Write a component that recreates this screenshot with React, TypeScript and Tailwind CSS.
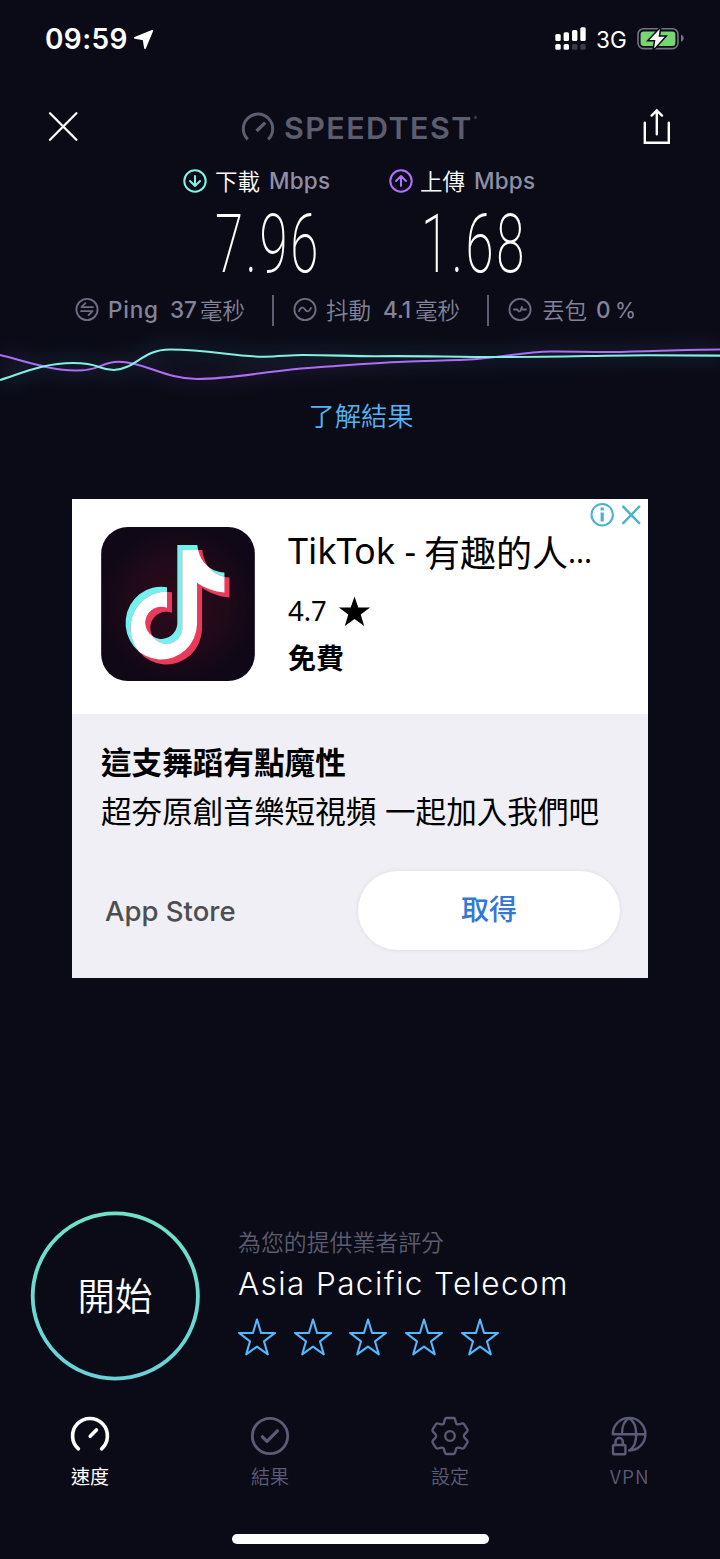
import type { ReactNode } from "react";

const tc = "font-['Noto_Sans_CJK_TC',sans-serif]";
const latin = "font-[Inter,'Noto_Sans_CJK_TC',sans-serif]";

const tabs = [
  { label: "速度", icon: <SpeedIcon />, active: true },
  { label: "結果", icon: <ResultsIcon />, active: false },
  { label: "設定", icon: <SettingsIcon />, active: false },
  { label: "VPN", icon: <VpnIcon />, active: false },
];

/* ─── Status bar ─── */
function StatusBar() {
  return (
    <div className={`flex h-[78px] items-center pl-[45px] pr-[36px] text-white ${latin}`}>
      <span className="w-[88px] text-[28px] font-semibold tracking-[0.4px]">09:59</span>
      <svg width="21" height="21" viewBox="133 28 21 21" fill="white" stroke="white" strokeWidth="1.8" strokeLinejoin="round">
        <path d="M152.2 29.8 134.9 36.8l8.7 1.6 1.4 8.7z" />
      </svg>
      <svg className="ml-auto" width="32" height="24" viewBox="555 26 32 24" fill="white">
        <rect x="555.3" y="33" width="5.4" height="7" rx="1.5" />
        <rect x="563.6" y="31.3" width="5.4" height="8.7" rx="1.5" />
        <rect x="572" y="29" width="5.4" height="11" rx="1.5" />
        <rect x="580.3" y="26.3" width="5.4" height="13.7" rx="1.5" />
        <rect x="555.3" y="43" width="5.4" height="5.8" rx="1.5" />
        <rect x="563.6" y="43" width="5.4" height="5.8" rx="1.5" />
        <rect x="572" y="43" width="5.4" height="5.8" rx="1.5" fill="#3b3b46" />
        <rect x="580.3" y="43" width="5.4" height="5.8" rx="1.5" fill="#3b3b46" />
      </svg>
      <span className="ml-[9px] mt-px w-[41px] text-[22.5px]">3G</span>
      <svg width="47" height="24" viewBox="637 27 47 24" fill="none">
        <rect x="638" y="28.8" width="40" height="19.8" rx="5.5" stroke="#74747e" strokeWidth="1.6" />
        <path d="M681 34.6c3.6 1.4 3.6 5.8 0 7.2z" fill="#74747e" />
        <rect x="640.6" y="31.4" width="34.8" height="14.6" rx="3.2" fill="#76d672" />
        <path d="M659.8 29 649.4 39.9h6l-1.3 8.5L664.6 36.8h-6z" fill="white" stroke="#0b0b17" strokeWidth="3" paintOrder="stroke" />
      </svg>
    </div>
  );
}

/* ─── Header ─── */
function Header() {
  return (
    <header className="flex h-[88px] items-center pl-[47px] pr-[48px] pt-[10px]">
      <svg width="32" height="32" viewBox="47 111 32 32" stroke="white" strokeWidth="2.3" strokeLinecap="round">
        <path d="m50 113.3 26.4 26.4M76.4 113.3 50 139.7" />
      </svg>
      <svg className="ml-[161px]" width="36" height="32" viewBox="240 111 36 32" fill="none" stroke="#5d5d70" strokeWidth="3">
        <path d="M247.8 139.4a14.7 14.7 0 1 1 20.4 0" />
        <path d="m256.6 131 8.6-8.4" strokeWidth="3.4" />
      </svg>
      <span className={`ml-[8px] mt-px w-[187px] whitespace-nowrap text-[30.5px] font-semibold leading-8 tracking-[1.4px] text-[#5d5d70] ${latin}`}>
        SPEEDTEST
      </span>
      <span className="mb-[20px] ml-[3px] size-[3px] rounded-full bg-[#3b3b4b]" />
      <svg className="ml-auto" width="30" height="38" viewBox="642 108 30 38" fill="none" stroke="white" strokeWidth="2.4" strokeLinecap="round">
        <path d="M644.8 122.8v20h24v-20M656.8 134.3v-23.6M651.6 115.6l5.2-5.2 5.2 5.2" />
      </svg>
    </header>
  );
}

/* ─── Results ─── */
function Arrow({ up = false }: { up?: boolean }) {
  return (
    <svg width="24" height="24" viewBox="-12 -12 24 24" fill="none" stroke={up ? "#b070fa" : "#80f2e6"} strokeWidth="2" strokeLinecap="round" strokeLinejoin="round">
      <circle r="10.7" />
      <path d={up ? "M0 5V-5M-5 0l5-5 5 5" : "M0-5V5M-5 0l5 5 5-5"} />
    </svg>
  );
}

function Stat({ children }: { children: ReactNode }) {
  return (
    <svg width="24" height="24" viewBox="-12 -11.5 24 24" fill="none" stroke="#6d6d84" strokeWidth="1.8" strokeLinecap="round" strokeLinejoin="round">
      <circle r="10.6" />
      {children}
    </svg>
  );
}

function Results() {
  return (
    <section>
      <div className={`flex h-[30px] items-center whitespace-nowrap pl-[183px] text-[22.5px] text-white ${latin}`}>
        <Arrow />
        <span className={`-mt-px ml-[8px] w-[54px] font-[350] ${tc}`}>下載</span>
        <span className="w-[120px] font-medium tracking-[0.2px] text-[#8e8ea6]">Mbps</span>
        <Arrow up />
        <span className={`-mt-px ml-[7px] w-[54px] font-[350] ${tc}`}>上傳</span>
        <span className="font-medium tracking-[0.2px] text-[#8e8ea6]">Mbps</span>
      </div>

      <div className="flex h-[94px] items-center pl-[215px] pt-[4px] font-[Roboto,sans-serif] text-[81px] font-[200] tracking-[4px] text-white">
        <span className="w-[206px] origin-left scale-x-[0.63] whitespace-nowrap">7.96</span>
        <span className="w-[206px] origin-left scale-x-[0.63] whitespace-nowrap">1.68</span>
      </div>

      <div className={`flex h-[40px] items-center whitespace-nowrap pl-[75px] text-[22.5px] text-[#83839a] ${latin}`}>
        <Stat>
          <path d="M6-2.4H-5.6l4-4M-6 1.6H5.6l-4 4" />
        </Stat>
        <span className="ml-[9px] w-[62px] font-medium tracking-[0.8px]">Ping</span>
        <span className="w-[30px] font-medium">37</span>
        <span className={`-mt-px w-[72px] font-[350] ${tc}`}>毫秒</span>
        <span className="h-[31px] w-[2px] bg-[#5d5d74]" />
        <span className="w-[19px]" />
        <Stat>
          <path d="M-6 1.6C-4-3-1.6-2.4 0 0s4 3 6-1.6" />
        </Stat>
        <span className={`-mt-px ml-[9px] w-[57px] font-[350] ${tc}`}>抖動</span>
        <span className="w-[32px] font-medium">4.1</span>
        <span className={`-mt-px w-[72px] font-[350] ${tc}`}>毫秒</span>
        <span className="h-[31px] w-[2px] bg-[#5d5d74]" />
        <span className="w-[19px]" />
        <Stat>
          <path d="M-6 0h3.4l1.4 2M6 0H2.6M.4 1.4 2-2.6" />
        </Stat>
        <span className={`-mt-px ml-[10px] w-[54px] font-[350] ${tc}`}>丟包</span>
        <span className="w-[19px] font-medium">0</span>
        <span className="text-[21.5px]">%</span>
      </div>
    </section>
  );
}

function SpeedGraph() {
  const download =
    "M0 380C25 372 45 363 73 363S98 370 114 370C136 369 142 349.5 170 349.5C210 349.5 235 357 264 356.7C280 356.5 290 355 303 355C330 355 350 356.2 376 356.2C420 355.6 450 357 500 357C560 357 600 355.4 647 355.2L720 355.6";
  const upload =
    "M0 355C25 361 50 370.5 76 370.5S100 361.7 119 361.7C145 362 165 379 197 379C235 379 270 370 321 367C350 365 375 363 404 361.8C430 360.6 455 360.6 477 359C505 357 525 351.8 551 351.6C570 351.4 590 352.2 611 352C650 351.6 680 349.5 720 349.4";
  return (
    <svg width="720" height="70" viewBox="0 330 720 70" fill="none" className="block">
      <defs>
        <filter id="glow" x="-5%" y="-100%" width="110%" height="300%">
          <feGaussianBlur stdDeviation="9" />
        </filter>
      </defs>
      <g strokeWidth="14" opacity="0.08" filter="url(#glow)">
        <path d={upload} stroke="#a56df0" />
        <path d={download} stroke="#5fd0ff" />
      </g>
      <path d={upload} stroke="#ad6df5" strokeWidth="2" />
      <path d={download} stroke="#84f0e4" strokeWidth="2.1" />
    </svg>
  );
}

/* ─── Ad card ─── */
function TikTokIcon() {
  const note =
    "M316 165H376C380 212 412 246 457 247V307C427 305 398 294 375 278V401A107 109 0 1 1 285 291V353A48 48 0 1 0 316 401Z";
  return (
    <svg width="154" height="154" viewBox="88 111 460 461">
      <defs>
        <radialGradient id="wine">
          <stop offset="0" stopColor="#300a1b" />
          <stop offset="0.6" stopColor="#200a19" />
          <stop offset="1" stopColor="#110817" />
        </radialGradient>
        <clipPath id="overlap">
          <path d={note} transform="translate(15 15)" />
        </clipPath>
      </defs>
      <rect x="88" y="111" width="460" height="461" rx="80" fill="url(#wine)" />
      <path d={note} fill="#74f1ee" />
      <path d={note} fill="#e93a5b" transform="translate(15 15)" />
      <g clipPath="url(#overlap)">
        <path d={note} fill="white" />
      </g>
    </svg>
  );
}

function AdCard() {
  return (
    <section className={`mx-[72px] mt-[67px] h-[479px] bg-[#efeff5] text-black ${tc}`}>
      <div className="flex h-[215px] bg-white">
        <div className="w-[216px] shrink-0 pl-[29px] pt-[28px]">
          <TikTokIcon />
        </div>
        <div className="min-w-0 flex-1 whitespace-nowrap pt-[29px]">
          <h2 className="flex h-[46px] items-center text-[36px]">
            <span className="w-[136px] font-['Noto_Sans',sans-serif] text-[36px]">TikTok -</span>
            <span>有趣的人</span>
            <span className="font-['Noto_Sans',sans-serif] text-[30px]">...</span>
          </h2>
          <div className="flex h-[74px] items-center">
            <span className="w-[50px] font-['Noto_Sans',sans-serif] text-[27.5px]">4.7</span>
            <svg width="33" height="31" viewBox="-16.5 -16 33 31">
              <path d="M0-15.5 3.8-4.4H15.6L6.2 2.6 9.7 14 0 7.1-9.7 14-6.2 2.6-15.6-4.4H-3.8Z" />
            </svg>
          </div>
          <p className="flex h-[18px] items-center text-[28px] font-bold">免費</p>
        </div>
        <svg className="-ml-[20px] mr-[7px] mt-[3px] shrink-0" width="52" height="26" viewBox="590 502 52 26" fill="none" stroke="#4bb1d3" strokeWidth="2">
          <circle cx="603.2" cy="514.7" r="10.7" />
          <path d="M603.2 512.4v9M603.2 507.4v3" strokeWidth="3.2" />
          <path d="m624.2 506.7 16 16.4M640.2 506.7l-16 16.4" strokeWidth="2.4" strokeLinecap="round" />
        </svg>
      </div>
      <div className="pl-[29px] pt-[23px]">
        <p className="flex h-[49px] items-center whitespace-nowrap text-[30.6px] font-bold">這支舞蹈有點魔性</p>
        <p className="flex h-[49px] items-center whitespace-nowrap text-[30.6px]">
          <span className="w-[284px]">超夯原創音樂短視頻</span>
          <span>一起加入我們吧</span>
        </p>
        <div className="mt-[36px] flex h-[79px] items-center pr-[28px]">
          <span className="ml-[4px] mt-[3px] font-[Inter,sans-serif] text-[27.5px] font-medium text-[#4e4e50]">App Store</span>
          <button className="ml-auto h-[79px] w-[262px] rounded-full bg-white pb-[5px] text-[28px] font-medium text-[#3478d6] shadow-[0_0_4px_rgba(0,0,0,0.09)]">
            取得
          </button>
        </div>
      </div>
    </section>
  );
}

/* ─── Start + provider rating ─── */
function StartRow() {
  return (
    <section className="mt-[233px] flex h-[170px] pl-[30px] text-white">
      <button className="grid size-[170px] place-items-center">
        <svg className="col-start-1 row-start-1" width="170" height="170" viewBox="0 0 170 170" fill="none">
          <defs>
            <linearGradient id="ring" x1="0" y1="0" x2="0" y2="1">
              <stop stopColor="#6fe2c8" />
              <stop offset="1" stopColor="#68d2d8" />
            </linearGradient>
          </defs>
          <circle cx="85.3" cy="85" r="82.6" stroke="url(#ring)" strokeWidth="3.8" />
        </svg>
        <span className={`col-start-1 row-start-1 -mt-[4px] text-[37.5px] font-[350] ${tc}`}>開始</span>
      </button>
      <div className="ml-[38px] whitespace-nowrap pt-[14px]">
        <p className={`flex h-[32px] items-center text-[22.9px] font-[350] text-[#5c5c70] ${tc}`}>為您的提供業者評分</p>
        <p className={`flex h-[54px] items-center text-[31.5px] font-light tracking-[1.4px] ${latin}`}>Asia Pacific Telecom</p>
        <div className="-ml-px mt-[6px] flex gap-[15.7px]">
          {[1, 2, 3, 4, 5].map((n) => (
            <svg key={n} width="40" height="40" viewBox="-20 -20 40 40" fill="none" stroke="#55b8ff" strokeWidth="2" strokeLinejoin="round">
              <path d="M0-17.6 4-4.1H18L7 4.4 10.8 17.4 0 9.6-10.8 17.4-7 4.4-18-4.1H-4Z" />
            </svg>
          ))}
        </div>
      </div>
    </section>
  );
}

/* ─── Tab bar ─── */
function SpeedIcon() {
  return (
    <svg width="40" height="40" viewBox="-20 -20 40 40" fill="none" stroke="currentColor" strokeWidth="3.6" strokeLinecap="round">
      <path d="M-11.6 12.9a17.4 17.4 0 1 1 23.2 0M.2.2 6.4-6" />
    </svg>
  );
}

function ResultsIcon() {
  return (
    <svg width="40" height="40" viewBox="-20 -20 40 40" fill="none" stroke="currentColor" strokeWidth="2.8" strokeLinecap="round" strokeLinejoin="round">
      <circle r="17.7" />
      <path d="m-7.6.8 4.6 4.6L7.4-5.2" strokeWidth="3.2" />
    </svg>
  );
}

function SettingsIcon() {
  return (
    <svg width="40" height="40" viewBox="-20 -20 40 40" fill="none" stroke="currentColor" strokeWidth="2.3" strokeLinejoin="round">
      <path d="M-3.6-18H3.6Q4.8-18 5.1-16.6L6-13Q6.6-11.3 8.6-11.6L12-12.5Q13.4-12.8 14.2-11.6L17.4-6.6Q18-5.4 17.1-4.4L14.4-1.6Q13.2 0 14.4 1.6L17.1 4.4Q18 5.4 17.4 6.6L14.2 11.6Q13.4 12.8 12 12.5L8.6 11.6Q6.6 11.3 6 13L5.1 16.6Q4.8 18 3.6 18H-3.6Q-4.8 18-5.1 16.6L-6 13Q-6.6 11.3-8.6 11.6L-12 12.5Q-13.4 12.8-14.2 11.6L-17.4 6.6Q-18 5.4-17.1 4.4L-14.4 1.6Q-13.2 0-14.4-1.6L-17.1-4.4Q-18-5.4-17.4-6.6L-14.2-11.6Q-13.4-12.8-12-12.5L-8.6-11.6Q-6.6-11.3-6-13L-5.1-16.6Q-4.8-18-3.6-18Z" />
      <circle r="4.8" />
    </svg>
  );
}

function VpnIcon() {
  return (
    <svg width="40" height="40" viewBox="610 1416 40 40" fill="none" stroke="currentColor" strokeWidth="2.4" strokeLinecap="round" strokeLinejoin="round">
      <path d="M612.8 1434.3a16.3 16.3 0 1 1 16.4 16.2M612.8 1434.3h32.4" />
      <path d="M622 1434c0-7 2.4-13.4 7-15.8 4.6 2.4 7.2 9 7.2 16s-2.4 13.4-6.6 16" />
      <rect x="613" y="1445" width="12.4" height="9.2" rx="1" />
      <path d="M615.6 1445v-3.4a3.6 3.6 0 0 1 7.2 0v3.4" />
    </svg>
  );
}

function TabBar() {
  return (
    <nav className={`mt-[35px] grid grid-cols-4 ${tc}`}>
      {tabs.map((tab) => (
        <div key={tab.label} className={`flex flex-col items-center ${tab.active ? "text-white" : "text-[#5b5b78]"}`}>
          {tab.icon}
          <span className={`mt-[4px] h-[32px] text-[19px] leading-[32px] ${tab.label === "VPN" ? "tracking-[1.2px]" : ""} ${tab.active ? "" : "font-[350]"}`}>
            {tab.label}
          </span>
        </div>
      ))}
    </nav>
  );
}

export default function App() {
  return (
    <main className="flex h-[1559px] w-[720px] flex-col overflow-hidden bg-[#0b0b17]">
      <StatusBar />
      <Header />
      <Results />
      <SpeedGraph />
      <a className={`flex h-[32px] items-center justify-center pb-[2px] pl-[2px] text-[26.3px] font-[350] text-[#53b4f5] ${tc}`}>了解結果</a>
      <AdCard />
      <StartRow />
      <TabBar />
      <div className="mx-auto mt-[42px] h-[10px] w-[257px] rounded-full bg-white" />
    </main>
  );
}
